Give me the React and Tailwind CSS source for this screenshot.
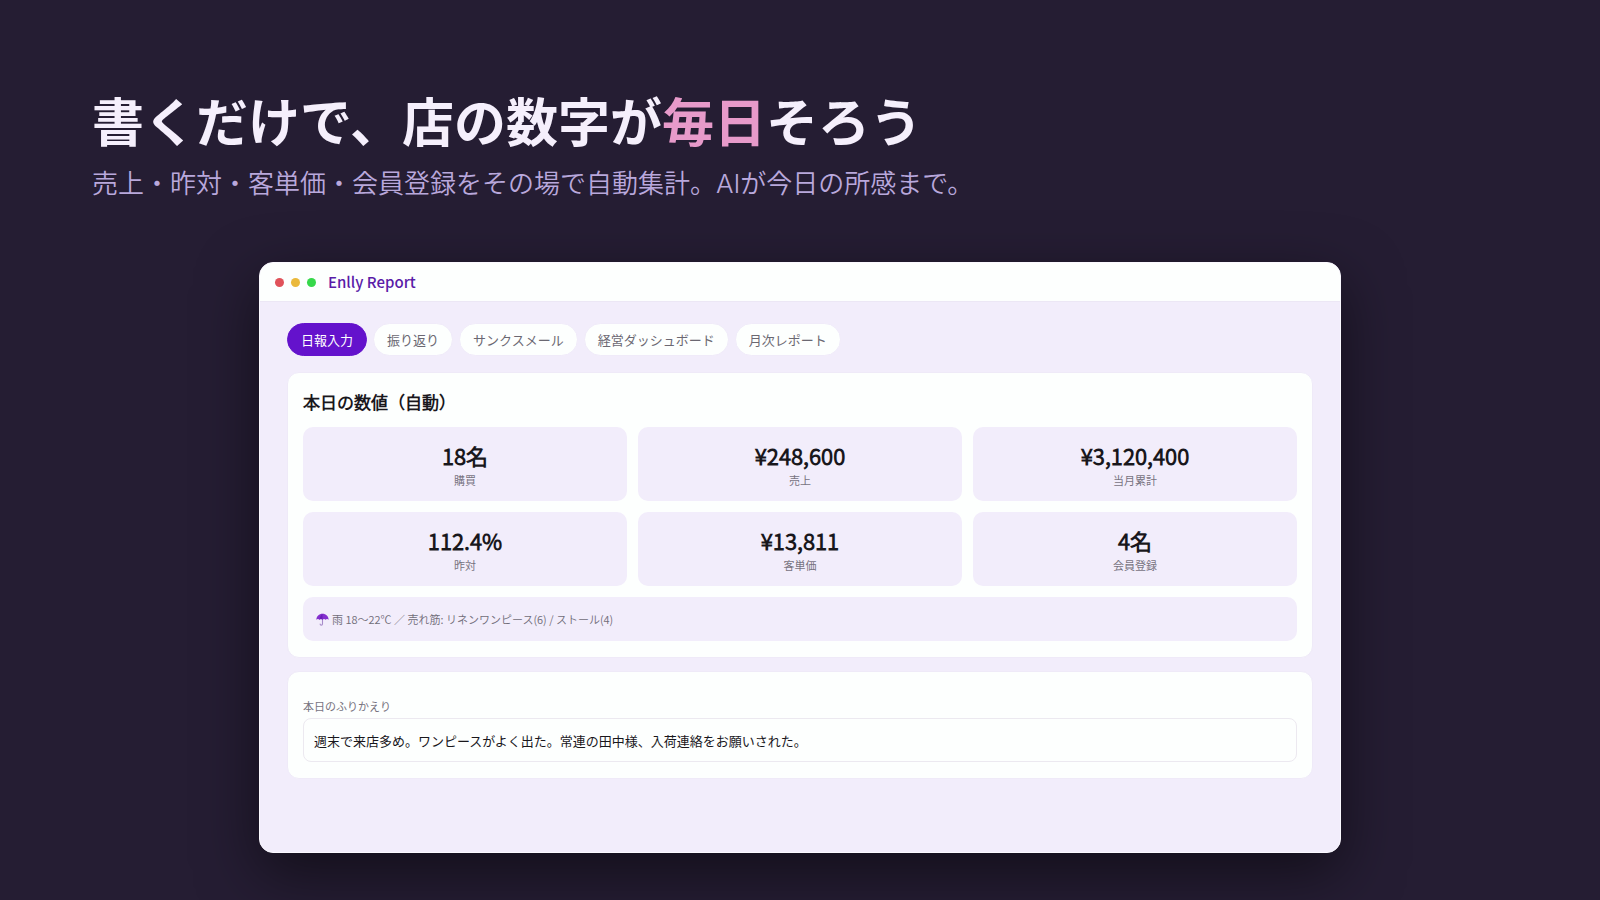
import React, { useState } from 'react';

const TABS = ['日報入力', '振り返り', 'サンクスメール', '経営ダッシュボード', '月次レポート'];

const METRICS = [
  { label: '購買', value: '18名' },
  { label: '売上', value: '¥248,600' },
  { label: '当月累計', value: '¥3,120,400' },
  { label: '昨対', value: '112.4%' },
  { label: '客単価', value: '¥13,811' },
  { label: '会員登録', value: '4名' },
];

const UmbrellaIcon = () => (
  <svg className="w-[13px] h-[13px] shrink-0" viewBox="0 0 24 24" fill="none" aria-hidden="true">
    <path
      d="M12 11v9.2a2.2 2.2 0 0 1-4.4 0"
      stroke="#a78bca"
      strokeWidth="2"
      strokeLinecap="round"
    />
    <path
      d="M12 1.5C5.6 1.5 1 6.4.6 12.4c1.6-1.6 4.2-1.6 5.8 0 1.5-1.6 4.1-1.6 5.6 0 1.5-1.6 4.1-1.6 5.6 0 1.6-1.6 4.2-1.6 5.8 0C23 6.4 18.4 1.5 12 1.5Z"
      fill="#8430ce"
    />
    <path d="M12 1.5c-3 2.6-5 6.4-5.6 10.9 1.5-1.6 4.1-1.6 5.6 0Z" fill="#6a1fb8" />
  </svg>
);

const WindowBar = ({ title }) => (
  <header className="flex items-center h-[39px] px-[15px] bg-[#fdfffe] border-b border-[#ece7f5]">
    <div className="flex gap-[7px] mr-3">
      <span className="size-[9px] rounded-full bg-[#e0525a]" />
      <span className="size-[9px] rounded-full bg-[#eab93c]" />
      <span className="size-[9px] rounded-full bg-[#36d84a]" />
    </div>
    <span className="text-[15px] font-medium text-[#5a1ca8]">{title}</span>
  </header>
);

const Tabs = ({ active, onChange }) => (
  <nav className="flex flex-wrap gap-1.5">
    {TABS.map((tab) => (
      <button
        key={tab}
        type="button"
        onClick={() => onChange(tab)}
        className={`h-[33px] px-[13px] rounded-full border text-[13px] leading-5 ${
          tab === active
            ? 'bg-[#6412cc] border-[#6412cc] text-white'
            : 'bg-[#fdfffe] border-[#f0ebf9] text-[#6b6872]'
        }`}
      >
        {tab}
      </button>
    ))}
  </nav>
);

const MetricTile = ({ label, value }) => (
  <div className="flex flex-col items-center pt-3 pb-3 rounded-[10px] bg-[#f2edfb]">
    <span className="text-[22px] leading-8 font-bold text-[#19171c] font-['Noto_Sans_CJK_JP_DemiLight','Noto_Sans_CJK_JP',sans-serif]">
      {value}
    </span>
    <span className="text-[11px] leading-[18px] text-[#77737f]">{label}</span>
  </div>
);

const Card = ({ children }) => (
  <section className="px-[15px] pt-[15px] pb-4 rounded-xl border border-[#efeaf8] bg-[#fdfffe]">
    {children}
  </section>
);

export default function App() {
  const [activeTab, setActiveTab] = useState(TABS[0]);
  const [reflection, setReflection] = useState(
    '週末で来店多め。ワンピースがよく出た。常連の田中様、入荷連絡をお願いされた。'
  );

  return (
    <main
      lang="ja"
      className="flex flex-col min-h-screen px-[92px] pt-[84px] pb-[47px] bg-[#251d33] font-['Noto_Sans_CJK_JP',sans-serif]"
    >
      <h1 className="text-[52px] leading-[72px] font-bold text-[#f5effc]">
        書くだけで、店の数字が<span className="text-[#e79aca]">毎日</span>そろう
      </h1>
      <p className="mt-2 text-[26px] leading-10 font-light text-[#b9a8dc] font-['Inter','Noto_Sans_CJK_JP_DemiLight','Noto_Sans_CJK_JP',sans-serif]">
        売上・昨対・客単価・会員登録をその場で自動集計。AIが今日の所感まで。
      </p>

      <div className="flex flex-col flex-1 w-full max-w-[1082px] mx-auto mt-[58px] rounded-[14px] overflow-hidden border border-[#fbf9ff] bg-[#f2edfb] shadow-[0_20px_60px_rgba(0,0,0,0.5)]">
        <WindowBar title="Enlly Report" />

        <div className="flex flex-col px-[27px] py-[21px]">
          <Tabs active={activeTab} onChange={setActiveTab} />

          <div className="flex flex-col gap-[13px] mt-4">
            <Card>
              <h2 className="text-[17px] leading-7 font-bold text-[#19171c] font-['Noto_Sans_CJK_JP_DemiLight','Noto_Sans_CJK_JP',sans-serif]">
                本日の数値（自動）
              </h2>
              <div className="grid grid-cols-3 gap-[11px] mt-[11px]">
                {METRICS.map((metric) => (
                  <MetricTile key={metric.label} {...metric} />
                ))}
              </div>
              <p className="flex items-center gap-[3px] h-11 mt-[11px] px-[13px] rounded-[10px] bg-[#f2edfb] text-[11px] text-[#706c78] font-['Noto_Sans_CJK_JP_DemiLight','Noto_Sans_CJK_JP',sans-serif]">
                <UmbrellaIcon />
                雨 18〜22℃ ／ 売れ筋: リネンワンピース(6) / ストール(4)
              </p>
            </Card>

            <Card>
              <label htmlFor="reflection" className="block mt-[9px] text-[11px] leading-5 text-[#77737f]">
                本日のふりかえり
              </label>
              <input
                id="reflection"
                type="text"
                value={reflection}
                onChange={(e) => setReflection(e.target.value)}
                className="block w-full h-11 mt-[2px] px-2.5 rounded-lg border border-[#ece9f0] bg-[#fdfffe] text-[13px] text-[#19171c]"
              />
            </Card>
          </div>
        </div>
      </div>
    </main>
  );
}
